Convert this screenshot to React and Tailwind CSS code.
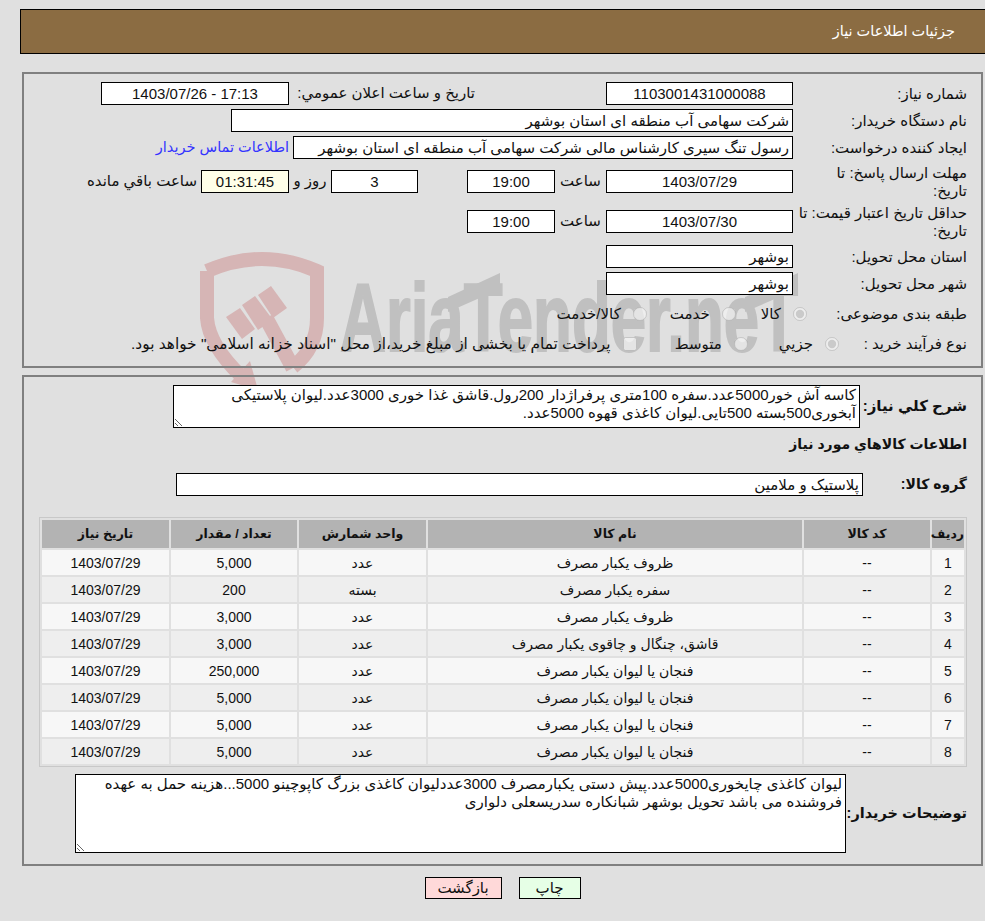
const rows = [
  ["1", "--", "ظروف یکبار مصرف", "عدد", "5,000"],
  ["2", "--", "سفره یکبار مصرف", "بسته", "200"],
  ["3", "--", "ظروف یکبار مصرف", "عدد", "3,000"],
  ["4", "--", "قاشق، چنگال و چاقوی یکبار مصرف", "عدد", "3,000"],
  ["5", "--", "فنجان یا لیوان یکبار مصرف", "عدد", "250,000"],
  ["6", "--", "فنجان یا لیوان یکبار مصرف", "عدد", "5,000"],
  ["7", "--", "فنجان یا لیوان یکبار مصرف", "عدد", "5,000"],
  ["8", "--", "فنجان یا لیوان یکبار مصرف", "عدد", "5,000"],
];

const Box = ({ className = "", bg = "bg-white", children }) => (
  <div className={`h-[23px] shrink-0 border border-black px-[3px] text-[15px] leading-[21px] whitespace-nowrap overflow-hidden ${bg} ${className}`}>
    {children}
  </div>
);

const Label = ({ children }) => (
  <div className="w-[174px] shrink-0 text-[15px] leading-[18px]">{children}</div>
);

const Choice = ({ type = "radio", name, checked, className = "", textSize = "text-[15px]", children }) => (
  <>
    <input type={type} name={name} disabled defaultChecked={checked} className={`shrink-0 w-[14px] h-[14px] ${className}`} />
    <span className={`mr-[12px] leading-[18px] whitespace-nowrap ${textSize}`}>{children}</span>
  </>
);

const Watermark = () => (
  <svg className="absolute left-0 top-0 w-[985px] h-[430px]" viewBox="0 0 985 430">
    <g fill="#d6b5b5">
      <path d="M207,271 Q262,247 317,271 L317,318 Q317,348 293,367" fill="none" stroke="#d6b5b5" strokeWidth="14" />
      <path d="M207,271 L207,318 Q209,345 241,376" fill="none" stroke="#d6b5b5" strokeWidth="14" />
      <path d="M266,318 L293,368" fill="none" stroke="#d6b5b5" strokeWidth="15" />
      <polygon points="250,361 258,390 231,382" />
      <polygon points="226,317 240,308 255,329 242,339" />
      <polygon points="242,305 255,296 273,320 258,330" />
      <polygon points="258,295 271,286 287,308 273,318" />
    </g>
    <g fill="#c0c0c0">
      <text x="340" y="351" fontSize="96" fontWeight="700" stroke="#c0c0c0" strokeWidth="2" textLength="458" lengthAdjust="spacingAndGlyphs" direction="ltr" className="font-['Liberation_Sans',sans-serif]">
        AriaTender.neT
      </text>
      <polygon points="448,297 500,273 500,289 448,312" />
      <polygon points="745,297 798,273 798,289 745,312" />
    </g>
  </svg>
);

export default function App() {
  return (
    <div dir="rtl" className="relative w-[985px] min-h-[921px] bg-[#e0e0e0] text-[#111] pt-[9px] font-['Liberation_Sans','DejaVu_Sans',sans-serif] overflow-hidden">
      <Watermark />
      <div className="relative">
        {/* header */}
        <div className="ml-[20px] h-[45px] border border-black border-r-0 bg-[#8b6c42] pr-[30px] text-[14.5px] leading-[43px] text-white">
          جزئیات اطلاعات نیاز
        </div>

        {/* main info */}
        <div className="ml-[22px] mr-[2px] mt-[18px] h-[296px] border-2 border-[#808080] pt-[8px] pr-[14px]">
          <div className="flex items-center h-[23px]">
            <Label>شماره نیاز:</Label>
            <Box className="w-[187px] text-center">1103001431000088</Box>
            <div className="mr-[131px] w-[186px] text-[15px] whitespace-nowrap">تاریخ و ساعت اعلان عمومي:</div>
            <Box className="w-[188px] text-center"><span dir="ltr">1403/07/26 - 17:13</span></Box>
          </div>
          <div className="flex items-center h-[23px] mt-[4px]">
            <Label>نام دستگاه خریدار:</Label>
            <Box className="w-[562px]">شرکت سهامی آب منطقه ای استان بوشهر</Box>
          </div>
          <div className="flex items-center h-[23px] mt-[4px]">
            <Label>ایجاد کننده درخواست:</Label>
            <Box className="w-[500px]">رسول تنگ سیری کارشناس مالی شرکت سهامی آب منطقه ای استان بوشهر</Box>
            <a className="mr-[4px] text-[14.5px] text-[#3333ff] whitespace-nowrap">اطلاعات تماس خریدار</a>
          </div>
          <div className="flex items-start h-[36px] mt-[5px]">
            <Label>مهلت ارسال پاسخ: تا<br />تاریخ:</Label>
            <div className="flex items-center mt-[6px]">
              <Box className="w-[187px] text-center">1403/07/29</Box>
              <div className="w-[51px] text-center text-[15px]">ساعت</div>
              <Box className="w-[88px] text-center">19:00</Box>
              <Box className="w-[87px] mr-[49px] text-center">3</Box>
              <div className="w-[42px] text-center text-[15px]">روز و</div>
              <Box className="w-[88px] text-center" bg="bg-[#ffffe8]">01:31:45</Box>
              <div className="mr-[4px] text-[15px] whitespace-nowrap">ساعت باقي مانده</div>
            </div>
          </div>
          <div className="flex items-start h-[36px] mt-[4px]">
            <Label>حداقل تاریخ اعتبار قیمت: تا<br />تاریخ:</Label>
            <div className="flex items-center mt-[6px]">
              <Box className="w-[187px] text-center">1403/07/30</Box>
              <div className="w-[51px] text-center text-[15px]">ساعت</div>
              <Box className="w-[88px] text-center">19:00</Box>
            </div>
          </div>
          <div className="flex items-center h-[23px] mt-[5px]">
            <Label>استان محل تحویل:</Label>
            <Box className="w-[187px]">بوشهر</Box>
          </div>
          <div className="flex items-center h-[23px] mt-[4px]">
            <Label>شهر محل تحویل:</Label>
            <Box className="w-[187px]">بوشهر</Box>
          </div>
          <div className="flex items-center h-[20px] mt-[9px]">
            <Label>طبقه بندی موضوعی:</Label>
            <Choice name="kind" checked className="mr-[-14px]">کالا</Choice>
            <Choice name="kind" className="mr-[25px]">خدمت</Choice>
            <Choice name="kind" className="mr-[23px]">کالا/خدمت</Choice>
          </div>
          <div className="flex items-center h-[20px] mt-[10px]">
            <Label>نوع فرآیند خرید :</Label>
            <Choice name="proc" checked className="mr-[-46px]">جزيي</Choice>
            <Choice name="proc" className="mr-[31px]">متوسط</Choice>
            <Choice type="checkbox" className="mr-[38px]" textSize="text-[15.4px]">پرداخت تمام یا بخشی از مبلغ خرید،از محل "اسناد خزانه اسلامی" خواهد بود.</Choice>
          </div>
        </div>

        {/* items */}
        <div className="ml-[22px] mr-[2px] mt-[7px] h-[491px] border-2 border-[#808080] pt-[8px] pr-[14px]">
          <div className="flex items-center h-[43px]">
            <div className="w-[107px] shrink-0 text-[15px] font-bold">شرح کلي نياز:</div>
            <textarea
              readOnly
              className="w-[687px] h-[43px] shrink-0 border border-black bg-white px-[3px] text-[15px] leading-[18px] outline-none"
              defaultValue="کاسه آش خور5000عدد.سفره 100متری پرفراژدار 200رول.قاشق غذا خوری 3000عدد.لیوان پلاستیکی آبخوری500بسته 500تایی.لیوان کاغذی قهوه 5000عدد."
            />
          </div>
          <div className="mt-[6px] h-[20px] text-[14px] leading-[20px] font-bold">اطلاعات کالاهاي مورد نياز</div>
          <div className="flex items-center h-[23px] mt-[19px]">
            <div className="w-[104px] shrink-0 text-[14px] font-bold">گروه کالا:</div>
            <Box className="w-[687px]">پلاستیک و ملامین</Box>
          </div>

          <table className="mt-[21px] w-[928px] table-fixed border-separate border-spacing-[2px] border border-[#c8c8c8] text-[14px]">
            <colgroup>
              <col className="w-[32px]" />
              <col className="w-[126px]" />
              <col className="w-[374px]" />
              <col className="w-[127px]" />
              <col className="w-[126px]" />
              <col className="w-[127px]" />
            </colgroup>
            <thead>
              <tr className="h-[28px] bg-[#b3b3b3] text-[12.5px] font-bold">
                {["ردیف", "کد کالا", "نام کالا", "واحد شمارش", "تعداد / مقدار", "تاریخ نیاز"].map((h) => (
                  <th key={h} className="p-0 text-center whitespace-nowrap">{h}</th>
                ))}
              </tr>
            </thead>
            <tbody>
              {rows.map((r, i) => (
                <tr key={r[0]} className={`h-[25px] ${i % 2 === 0 ? "bg-[#f7f7f7]" : "bg-[#eeeeee]"}`}>
                  {r.map((c, j) => (
                    <td key={j} className="p-0 pt-[2px] text-center whitespace-nowrap">{c}</td>
                  ))}
                  <td className="p-0 pt-[2px] text-center">1403/07/29</td>
                </tr>
              ))}
            </tbody>
          </table>

          <div className="flex items-center h-[79px] mt-[7px]">
            <div className="w-[121px] shrink-0 text-[14.5px] font-bold whitespace-nowrap">توضیحات خریدار:</div>
            <textarea
              readOnly
              className="w-[771px] h-[79px] shrink-0 border border-black bg-white px-[3px] text-[15px] leading-[18px] outline-none"
              defaultValue="لیوان کاغذی چایخوری5000عدد.پیش دستی یکبارمصرف 3000عددلیوان کاغذی بزرگ کاپوچینو 5000...هزینه حمل به عهده فروشنده می باشد تحویل بوشهر شبانکاره سدریسعلی دلواری"
            />
          </div>
        </div>

        {/* buttons */}
        <div className="ml-[22px] mr-[2px] mt-[11px] flex justify-center gap-[17px]">
          <button className="w-[62px] h-[22px] border border-black bg-[#e6ffe6] text-[15px] leading-[20px]">چاپ</button>
          <button className="w-[77px] h-[22px] border border-black bg-[#ffd9d9] text-[15px] leading-[20px]">بازگشت</button>
        </div>
      </div>
    </div>
  );
}
